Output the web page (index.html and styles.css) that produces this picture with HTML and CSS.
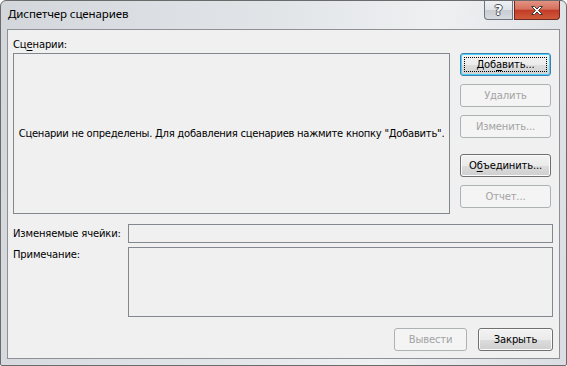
FILE: index.html
```html
<!DOCTYPE html>
<html>
<head>
    <meta charset="UTF-8">
    <title>Диспетчер сценариев</title>
    <link rel="stylesheet" href="styles.css">
</head>
<body>
    <div class="window">
        <div class="titlebar">
            <span class="title">Диспетчер сценариев</span>
            <div class="caption">
                <div class="cap help">?</div>
                <div class="cap red-x">
                    <svg class="x-icon" width="14" height="11" viewBox="0 0 14 11">
                        <path d="M1.5 1.5h3l2.5 2.5 2.5-2.5h3l-4 4 4 4h-3l-2.5-2.5-2.5 2.5h-3l4-4z" fill="#fff" stroke="#3a3a3a" stroke-width="1" stroke-linejoin="round"/>
                    </svg>
                </div>
            </div>
        </div>
        <div class="client">
            <div class="top">
                <div class="list-col">
                    <div class="lbl">Сц<u>е</u>нарии:</div>
                    <div class="listbox"><span class="empty">Сценарии не определены. Для добавления сценариев нажмите кнопку "Добавить".</span></div>
                </div>
                <div class="side">
                    <button class="btn default"><span class="focus">Доб<u>а</u>вить...</span></button>
                    <button class="btn" disabled>Удалить</button>
                    <button class="btn" disabled>Изменить...</button>
                    <button class="btn merge">О<u>б</u>ъединить...</button>
                    <button class="btn" disabled>Отчет...</button>
                </div>
            </div>
            <div class="row cells">
                <span class="row-lbl">Изменяемые ячейки:</span>
                <div class="textbox"></div>
            </div>
            <div class="row note">
                <span class="row-lbl">Примечание:</span>
                <div class="textarea"></div>
            </div>
            <div class="footer">
                <button class="btn show" disabled>Вывести</button>
                <button class="btn shut">Закрыть</button>
            </div>
        </div>
    </div>
</body>
</html>
```

FILE: styles.css
```css
* {
    margin: 0;
    padding: 0;
    box-sizing: border-box;
}
body {
    background: #fff;
    font-family: "DejaVu Sans", Tahoma, sans-serif;
    font-size: 10px;
    letter-spacing: -0.15px;
    color: #000;
}
.window {
    width: 567px;
    height: 366px;
    border: 1px solid #6b6b6b;
    border-radius: 6px 6px 2px 2px;
    background: linear-gradient(100deg, #d3d7dc 0%, #e2e5e8 45%, #eef0f2 70%, #dadde1 100%);
    display: flex;
    flex-direction: column;
}
.titlebar {
    height: 28px;
    display: flex;
    justify-content: space-between;
    align-items: flex-start;
}
.title {
    font-family: "Noto Sans", "Open Sans", sans-serif;
    font-size: 11.5px;
    letter-spacing: -0.1px;
    line-height: 16px;
    padding: 5px 0 0 7px;
    color: #000;
}
.caption {
    display: flex;
    flex-shrink: 0;
    gap: 1px;
    margin-right: 6px;
}
.cap {
    height: 19px;
    border: 1px solid #6d7580;
    border-top: none;
    display: flex;
    align-items: center;
    justify-content: center;
}
.help {
    width: 29px;
    border-radius: 0 0 0 4px;
    background: linear-gradient(#eef0f3 0%, #dfe3e7 50%, #c8cdd3 51%, #d7dbe0 100%);
    font-family: "DejaVu Sans", sans-serif;
    font-weight: bold;
    font-size: 14px;
    color: #fff;
    text-shadow: -1px 0 #4a4f56, 1px 0 #4a4f56, 0 -1px #4a4f56, 0 1px #4a4f56;
}
.red-x {
    width: 46px;
    border-color: #6e2a22;
    border-radius: 0 0 4px 0;
    background: #c84a35 linear-gradient(#e39383 0%, #d6705e 45%, #c23c27 52%, #cf5a3a 100%);
}
.x-icon {
    display: block;
}
.client {
    flex: 1;
    margin: 0 6px 6px 6px;
    border: 1px solid #8d9196;
    background: #f0f0f0;
    padding: 8px 5px 7px 5px;
    display: flex;
    flex-direction: column;
}
.top {
    display: flex;
    gap: 10px;
}
.list-col {
    width: 437px;
}
.lbl {
    height: 13px;
    line-height: 13px;
    margin-bottom: 2px;
}
u {
    text-decoration: underline;
    text-underline-offset: 2px;
}
.listbox {
    height: 161px;
    border: 1px solid #828790;
    display: flex;
    align-items: center;
    justify-content: center;
    background: #f0f0f0;
}
.empty {
    white-space: nowrap;
    letter-spacing: -0.26px;
}
.side {
    padding-top: 15px;
    display: flex;
    flex-direction: column;
    gap: 8px;
}
.btn {
    width: 91px;
    height: 23px;
    font-family: inherit;
    font-size: 10px;
    letter-spacing: -0.15px;
    color: #000;
    border: 1px solid #707070;
    border-radius: 3px;
    background: linear-gradient(#f2f2f2 0%, #ebebeb 50%, #dddddd 51%, #cfcfcf 100%);
    box-shadow: inset 0 0 0 1px #fbfbfb;
    display: flex;
    align-items: center;
    justify-content: center;
}
.btn:disabled {
    border-color: #adb2b5;
    background: #f4f4f4;
    box-shadow: none;
    color: #a3a3a3;
}
.default {
    border-color: #3c7fb1;
    box-shadow: inset 0 0 0 1px #48d1fb;
    background: linear-gradient(#f3f3f3 0%, #ececec 50%, #dedede 51%, #d2d2d2 100%);
}
.focus {
    display: block;
    width: 83px;
    height: 15px;
    line-height: 13px;
    border: 1px dotted #000;
    text-align: center;
}
.merge {
    margin-top: 8px;
}
.row {
    display: flex;
}
.row-lbl {
    width: 115px;
    line-height: 13px;
}
.cells {
    margin-top: 10px;
    align-items: center;
}
.textbox {
    width: 425px;
    height: 19px;
    border: 1px solid #828790;
}
.note {
    margin-top: 4px;
}
.note .row-lbl {
    padding-top: 1px;
}
.textarea {
    width: 425px;
    height: 70px;
    border: 1px solid #828790;
}
.footer {
    margin-top: auto;
    display: flex;
    justify-content: flex-end;
    gap: 11px;
    padding-right: 1px;
}
.show {
    width: 73px;
}
.shut {
    width: 75px;
}
```
